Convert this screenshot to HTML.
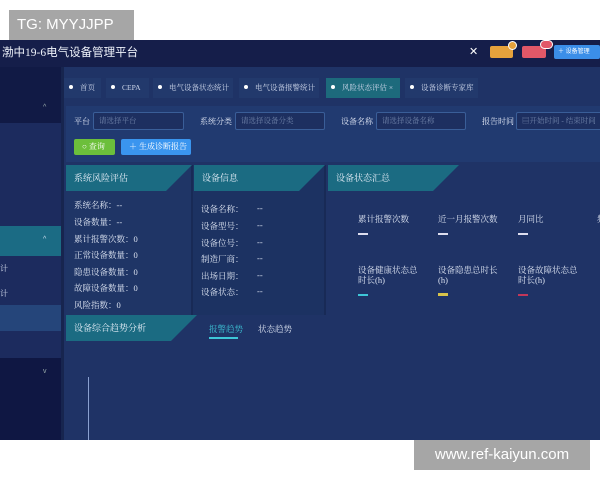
<!DOCTYPE html><html><head><meta charset="utf-8"><style>
*{margin:0;padding:0;box-sizing:border-box}
body{width:600px;height:480px;background:#fff;position:relative;overflow:hidden;font-family:"Liberation Serif","Noto Serif CJK SC",serif;color:#d8e0f0}
.a{position:absolute}
.s{font-family:"Liberation Sans","Noto Sans CJK SC",sans-serif}
.tab{position:absolute;top:78px;height:20px;background:#22396c;font-size:7.5px;line-height:20px;padding-left:5px;color:#cdd6ea;white-space:nowrap;overflow:hidden}
.tab:before{content:"";display:inline-block;width:4px;height:4px;border-radius:2px;background:#fff;margin-right:7px;vertical-align:1px}
.inp{position:absolute;top:112px;height:18px;border:1px solid #3a5e98;border-radius:2px;background:#1d2f60;font-size:7.5px;color:#6f82a8;line-height:16px;padding-left:5px;white-space:nowrap;overflow:hidden}
.lbl{position:absolute;top:116px;font-size:8px;color:#e0e6f4;white-space:nowrap}
.hd{position:absolute;height:26px;background:#1b6b82;font-size:9px;line-height:26px;padding-left:8px;color:#e6eef8;clip-path:polygon(0 0,100% 0,calc(100% - 26px) 100%,0 100%)}
.t{position:absolute;font-size:8.5px;color:#dde4f2;white-space:nowrap}
</style></head><body>
<div class="a s" style="left:9px;top:10px;width:125px;height:30px;background:#a6a6a6;color:#fff;font-size:15px;line-height:30px;padding-left:8px">TG: MYYJJPP</div>
<div class="a" style="left:0;top:40px;width:600px;height:400px;background:#1f3366"></div>
<div class="a" style="left:0;top:40px;width:600px;height:27px;background:#151e4a"></div>
<div class="a" style="left:2px;top:44px;font-size:11.5px;color:#eef2fa;white-space:nowrap;font-family:'Liberation Serif','Noto Sans CJK SC',serif">渤中19-6电气设备管理平台</div>
<div class="a s" style="left:469px;top:45px;font-size:11px;color:#fff">✕</div>
<div class="a" style="left:490px;top:46px;width:23px;height:12px;background:#e6a23c;border-radius:2px"></div>
<div class="a" style="left:508px;top:41px;width:9px;height:9px;background:#e6a23c;border-radius:5px;border:1px solid #fff"></div>
<div class="a" style="left:522px;top:46px;width:24px;height:12px;background:#e25868;border-radius:2px"></div>
<div class="a" style="left:540px;top:40px;width:13px;height:9px;background:#e25868;border-radius:5px;border:1px solid #fff"></div>
<div class="a s" style="left:554px;top:45px;width:46px;height:14px;background:#3b8ee8;border-radius:2px;font-size:6px;line-height:14px;color:#fff;padding-left:4px;white-space:nowrap">＋ 设备管理</div>
<div class="a" style="left:0;top:67px;width:61px;height:373px;background:#1c2b5e"></div>
<div class="a" style="left:0;top:67px;width:61px;height:56px;background:#111a45"></div>
<div class="a" style="left:0;top:226px;width:61px;height:30px;background:#1b6b84"></div>
<div class="a" style="left:0;top:305px;width:61px;height:26px;background:#25457a"></div>
<div class="a" style="left:0;top:358px;width:61px;height:82px;background:#0f1743"></div>
<div class="a" style="left:61px;top:67px;width:3px;height:373px;background:#17254f"></div>
<div class="a s" style="left:43px;top:104px;font-size:7px;color:#9aa">^</div>
<div class="a s" style="left:43px;top:236px;font-size:7px;color:#cde">^</div>
<div class="a s" style="left:43px;top:368px;font-size:7px;color:#9aa">v</div>
<div class="a" style="left:0;top:263px;font-size:8px">计</div>
<div class="a" style="left:0;top:288px;font-size:8px">计</div>
<div class="tab" style="left:64px;width:37px">首页</div>
<div class="tab" style="left:106px;width:43px">CEPA</div>
<div class="tab" style="left:153px;width:80px">电气设备状态统计</div>
<div class="tab" style="left:239px;width:80px">电气设备报警统计</div>
<div class="tab" style="left:326px;width:74px;background:#1d6a7c">风险状态评估 ×</div>
<div class="tab" style="left:405px;width:73px">设备诊断专家库</div>
<div class="a" style="left:66px;top:106px;width:534px;height:56px;background:#213a70"></div>
<div class="lbl" style="left:74px">平台</div>
<div class="inp" style="left:93px;width:91px">请选择平台</div>
<div class="lbl" style="left:200px">系统分类</div>
<div class="inp" style="left:235px;width:90px">请选择设备分类</div>
<div class="lbl" style="left:341px">设备名称</div>
<div class="inp" style="left:376px;width:90px">请选择设备名称</div>
<div class="lbl" style="left:482px">报告时间</div>
<div class="inp" style="left:516px;width:90px">▤开始时间 - 结束时间</div>
<div class="a" style="left:74px;top:139px;width:41px;height:16px;background:#6cbf3b;border-radius:2px;font-size:8px;line-height:16px;color:#fff;padding-left:8px">○ 查询</div>
<div class="a" style="left:121px;top:139px;width:70px;height:16px;background:#3a95ef;border-radius:2px;font-size:8px;line-height:16px;color:#fff;padding-left:8px;white-space:nowrap">＋ 生成诊断报告</div>
<div class="a" style="left:66px;top:165px;width:125px;height:150px;background:#1f3566"></div>
<div class="a" style="left:191px;top:165px;width:135px;height:150px;background:#1c3262;border-left:2px solid #182a56;border-right:2px solid #182a56"></div>
<div class="hd" style="left:66px;top:165px;width:126px">系统风险评估</div>
<div class="hd" style="left:194px;top:165px;width:131px">设备信息</div>
<div class="hd" style="left:328px;top:165px;width:131px">设备状态汇总</div>
<div class="t" style="left:74px;top:199px">系统名称：--</div>
<div class="t" style="left:74px;top:216px">设备数量：--</div>
<div class="t" style="left:74px;top:233px">累计报警次数：0</div>
<div class="t" style="left:74px;top:249px">正常设备数量：0</div>
<div class="t" style="left:74px;top:266px">隐患设备数量：0</div>
<div class="t" style="left:74px;top:282px">故障设备数量：0</div>
<div class="t" style="left:74px;top:299px">风险指数：0</div>
<div class="t" style="left:201px;top:203px">设备名称：</div><div class="t" style="left:257px;top:203px">--</div>
<div class="t" style="left:201px;top:220px">设备型号：</div><div class="t" style="left:257px;top:220px">--</div>
<div class="t" style="left:201px;top:237px">设备位号：</div><div class="t" style="left:257px;top:237px">--</div>
<div class="t" style="left:201px;top:253px">制造厂商：</div><div class="t" style="left:257px;top:253px">--</div>
<div class="t" style="left:201px;top:270px">出场日期：</div><div class="t" style="left:257px;top:270px">--</div>
<div class="t" style="left:201px;top:286px">设备状态：</div><div class="t" style="left:257px;top:286px">--</div>
<div class="t" style="left:358px;top:213px">累计报警次数</div>
<div class="t" style="left:438px;top:213px">近一月报警次数</div>
<div class="t" style="left:518px;top:213px">月同比</div>
<div class="t" style="left:597px;top:213px">频</div>
<div class="a" style="left:358px;top:233px;width:10px;height:2px;background:#dde"></div>
<div class="a" style="left:438px;top:233px;width:10px;height:2px;background:#dde"></div>
<div class="a" style="left:518px;top:233px;width:10px;height:2px;background:#dde"></div>
<div class="t" style="left:358px;top:265px;line-height:10px">设备健康状态总<br>时长(h)</div>
<div class="t" style="left:438px;top:265px;line-height:10px">设备隐患总时长<br>(h)</div>
<div class="t" style="left:518px;top:265px;line-height:10px">设备故障状态总<br>时长(h)</div>
<div class="a" style="left:358px;top:294px;width:10px;height:2px;background:#3ec6d8"></div>
<div class="a" style="left:438px;top:293px;width:10px;height:3px;background:#d8c34a"></div>
<div class="a" style="left:518px;top:294px;width:10px;height:2px;background:#c2375a"></div>
<div class="hd" style="left:66px;top:315px;width:131px">设备综合趋势分析</div>
<div class="t" style="left:209px;top:323px;color:#3ec6d8">报警趋势</div>
<div class="a" style="left:209px;top:337px;width:29px;height:2px;background:#3ec6d8"></div>
<div class="t" style="left:258px;top:323px">状态趋势</div>
<div class="a" style="left:88px;top:377px;width:1px;height:63px;background:#8aa0d0"></div>
<div class="a s" style="left:414px;top:440px;width:176px;height:30px;background:#a6a6a6;color:#fff;font-size:15px;line-height:30px;text-align:center">www.ref-kaiyun.com</div>
</body></html>
